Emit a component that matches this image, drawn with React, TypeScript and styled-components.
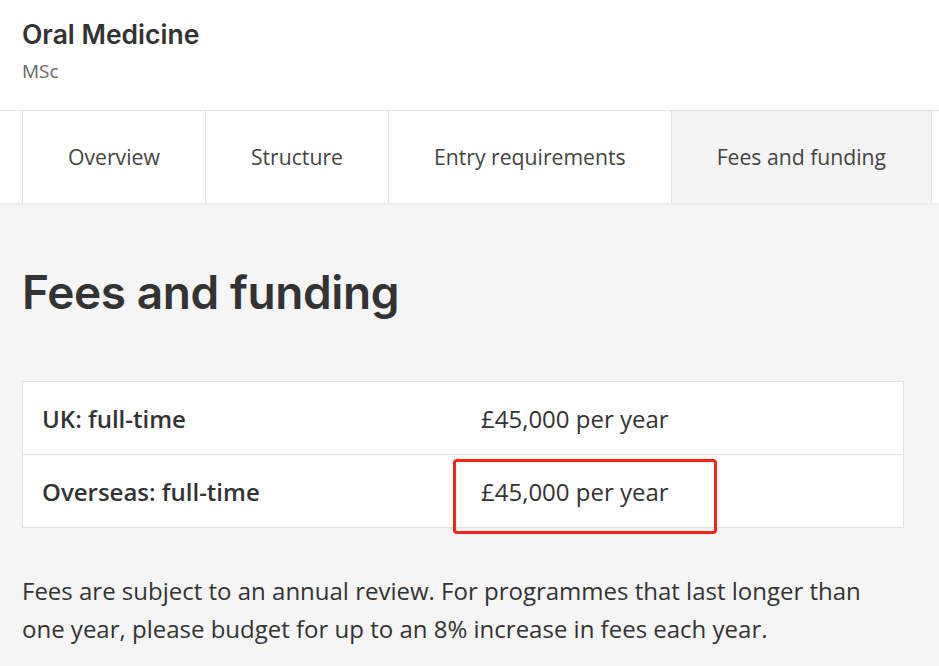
import styled, { createGlobalStyle } from 'styled-components';

const GlobalStyle = createGlobalStyle`
  html, body {
    margin: 0;
    padding: 0;
    background: #f5f5f5;
  }
  body {
    font-family: 'Open Sans', 'Liberation Sans', sans-serif;
    color: #333;
  }
`;

const tabs = ['Overview', 'Structure', 'Entry requirements', 'Fees and funding'];

const fees = [
  { label: 'UK: full-time', value: '£45,000 per year' },
  { label: 'Overseas: full-time', value: '£45,000 per year', highlight: true },
];

export default function App() {
  return (
    <Page>
      <GlobalStyle />
      <Header>
        <Title>Oral Medicine</Title>
        <Award>MSc</Award>
      </Header>
      <TabBar>
        {tabs.map((tab) => (
          <Tab key={tab} $active={tab === 'Fees and funding'}>
            {tab}
          </Tab>
        ))}
      </TabBar>
      <Content>
        <Heading>Fees and funding</Heading>
        <FeeTable>
          {fees.map((fee) => (
            <FeeRow key={fee.label}>
              <Label>{fee.label}</Label>
              <Value>
                {fee.value}
                {fee.highlight && <Highlight />}
              </Value>
            </FeeRow>
          ))}
        </FeeTable>
        <Note>
          Fees are subject to an annual review. For programmes that last longer than
          one year, please budget for up to an 8% increase in fees each year.
        </Note>
      </Content>
    </Page>
  );
}

const Page = styled.div`
  width: 939px;
  min-height: 666px;
  background: #f5f5f5;
  overflow: hidden;
`;

const Header = styled.header`
  background: #fff;
  height: 111px;
  box-sizing: border-box;
  padding: 18px 22px 0;
  border-bottom: 1px solid #e2e2e2;
`;

const Title = styled.h1`
  margin: 0;
  font-family: Inter, 'Liberation Sans', sans-serif;
  font-size: 26.5px;
  font-weight: 600;
  line-height: 32px;
  color: #333;
`;

const Award = styled.div`
  margin-top: 9px;
  font-size: 19px;
  line-height: 24px;
  color: #666;
`;

const TabBar = styled.nav`
  display: flex;
  background: #fff;
  height: 92px;
  padding-left: 22px;
  box-shadow: 0 1px 3px rgba(0, 0, 0, 0.06);
`;

const Tab = styled.div<{ $active?: boolean }>`
  display: flex;
  flex-shrink: 0;
  align-items: center;
  justify-content: center;
  padding: 0 45px 2px;
  font-size: 21.2px;
  white-space: nowrap;
  color: #444;
  border-left: 1px solid #e2e2e2;
  background: ${(p) => (p.$active ? '#f4f4f4' : '#fff')};

  &:last-child {
    border-right: 1px solid #e2e2e2;
  }
`;

const Content = styled.main`
  padding: 57px 35px 30px 22px;
`;

const Heading = styled.h2`
  margin: 0;
  font-family: Inter, 'Liberation Sans', sans-serif;
  font-size: 46px;
  font-weight: 600;
  line-height: 64px;
  color: #333;
  letter-spacing: -0.4px;
`;

const FeeTable = styled.div`
  margin-top: 57px;
  background: #fff;
  border: 1px solid #e2e2e2;
`;

const FeeRow = styled.div`
  display: grid;
  grid-template-columns: 439px 1fr;
  height: 72px;
  align-items: stretch;
  padding-left: 19px;

  & + & {
    border-top: 1px solid #e2e2e2;
  }
`;

const Label = styled.div`
  display: flex;
  align-items: center;
  font-size: 24px;
  font-weight: 600;
  color: #333;
`;

const Value = styled.div`
  position: relative;
  display: flex;
  align-items: center;
  font-size: 24px;
  color: #333;
`;

const Highlight = styled.span`
  position: absolute;
  left: -28px;
  top: 4px;
  width: 264px;
  height: 75px;
  box-sizing: border-box;
  border: 3px solid #fb2418;
  border-radius: 4px;
`;

const Note = styled.p`
  margin: 44px 0 0;
  font-size: 24px;
  line-height: 38px;
  color: #333;
  max-width: 880px;
`;
